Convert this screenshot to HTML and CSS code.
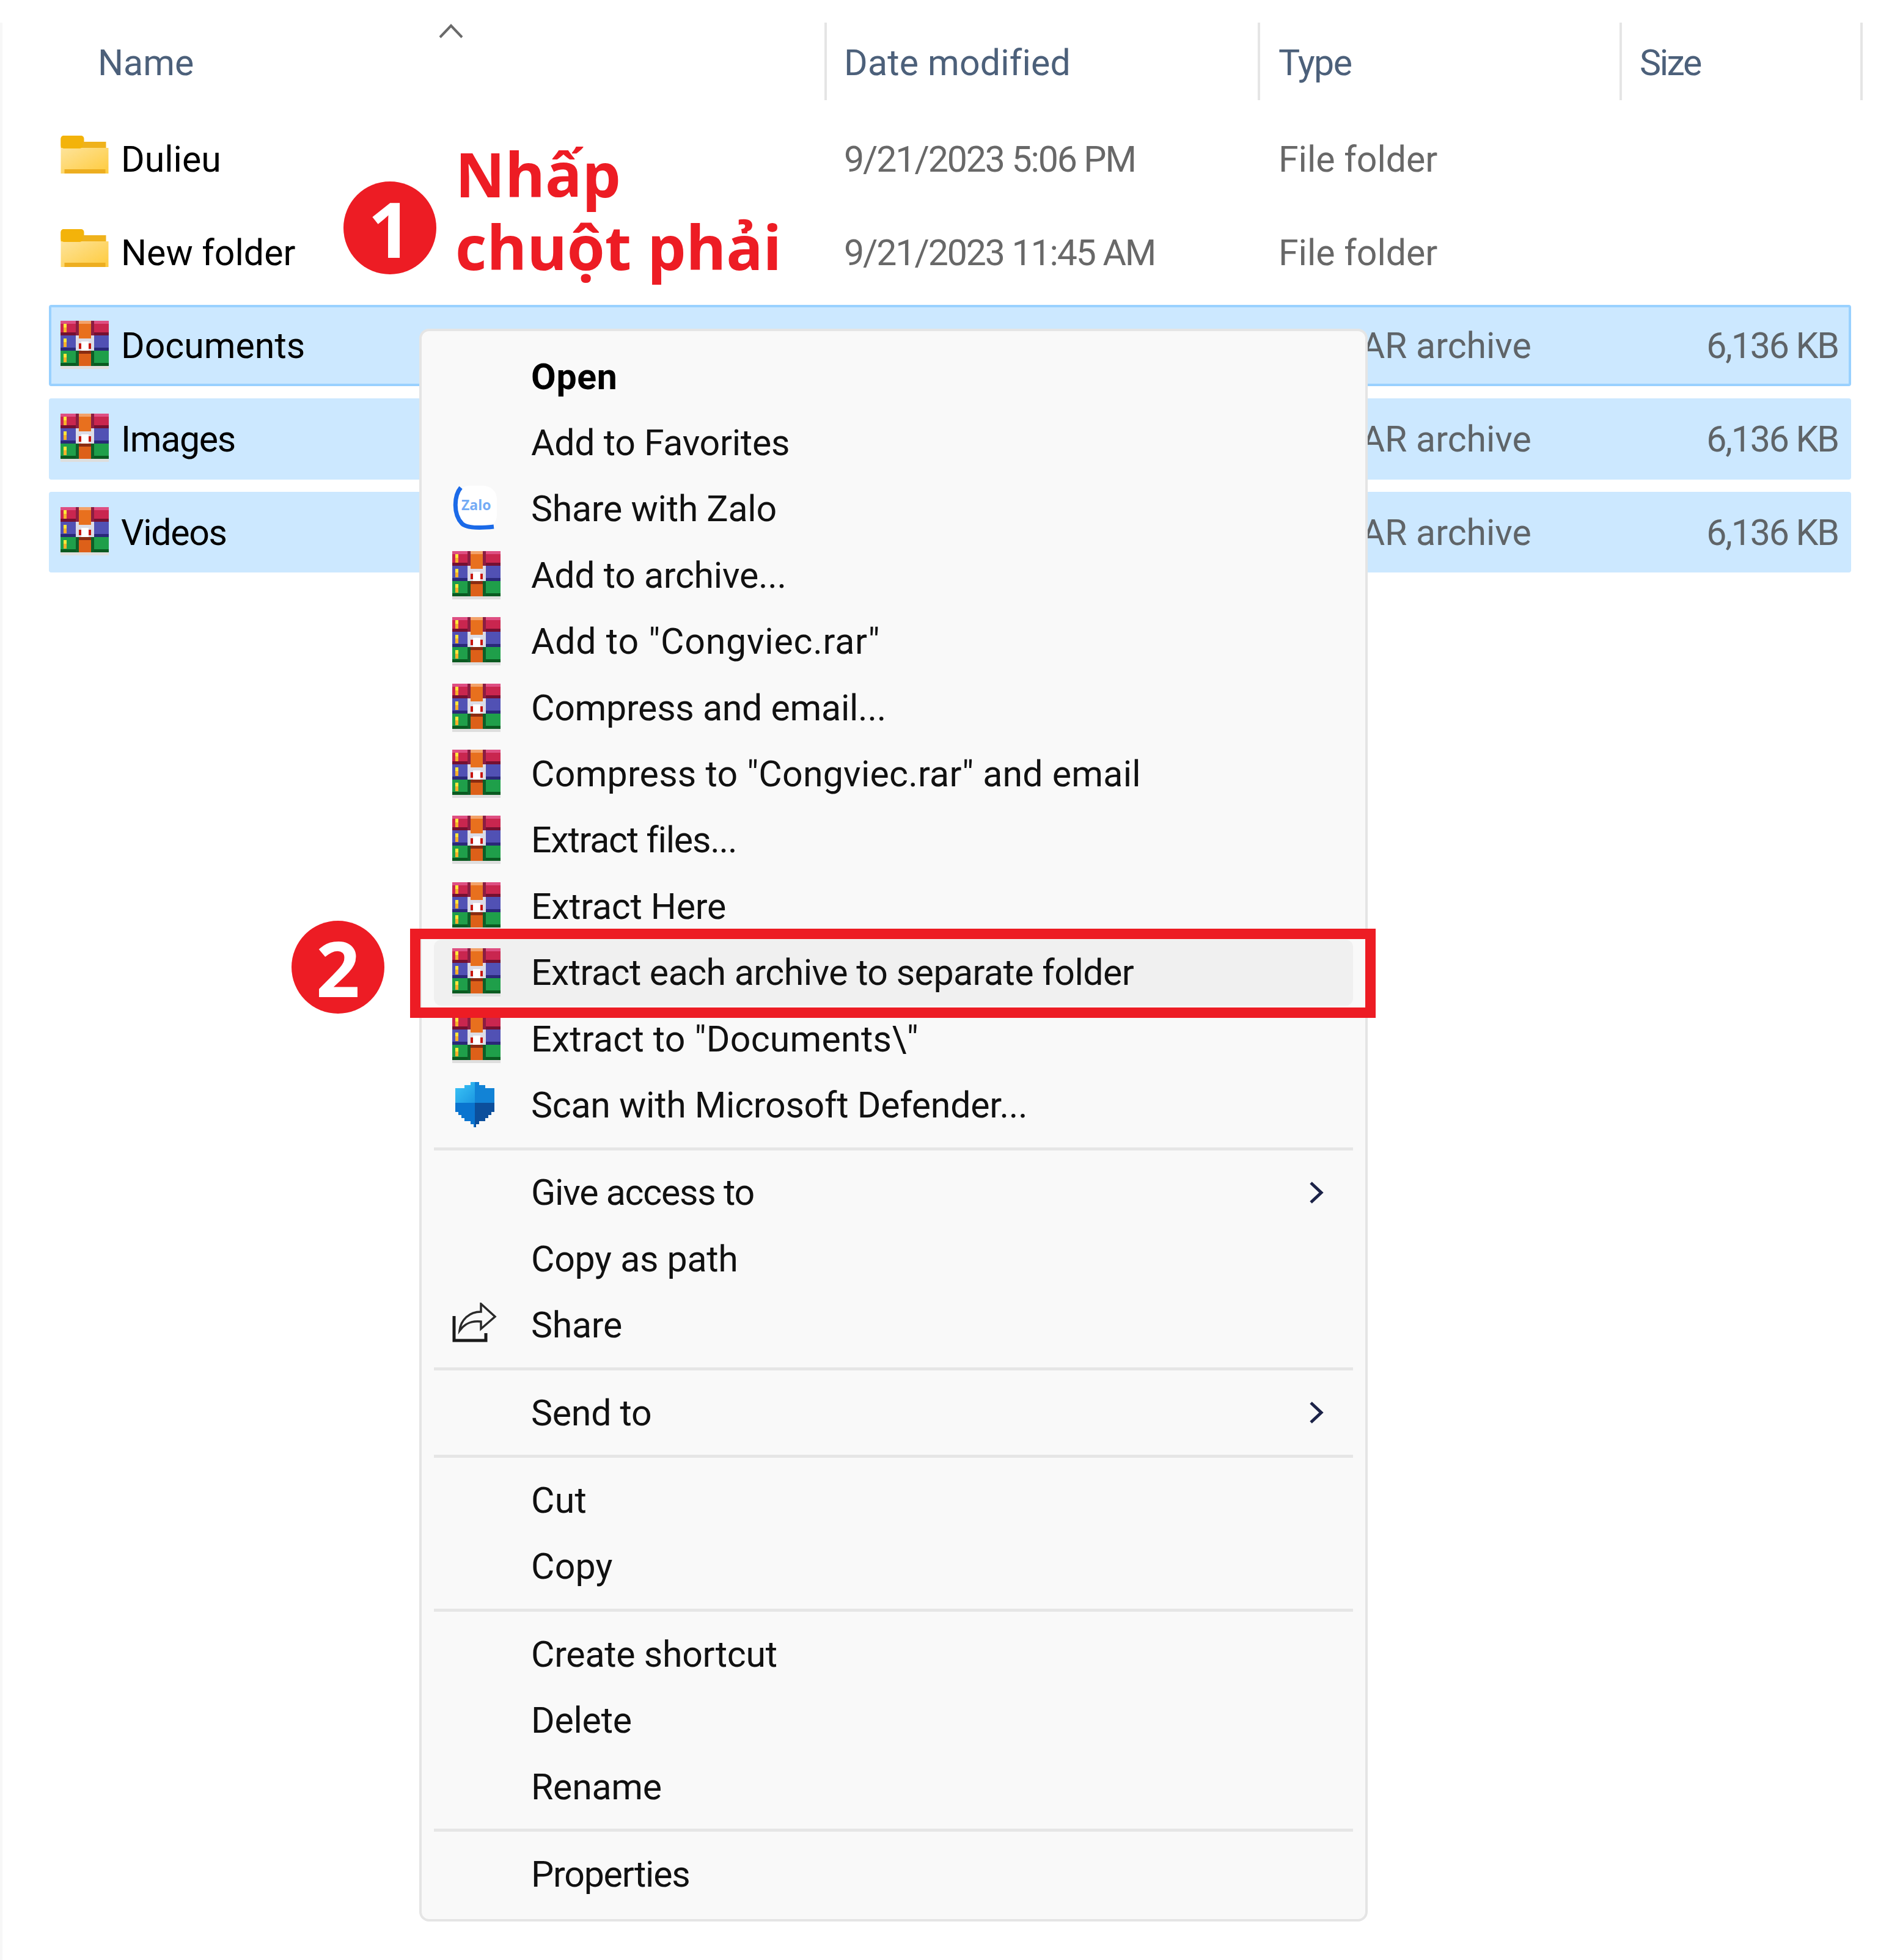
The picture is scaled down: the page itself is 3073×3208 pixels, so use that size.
FILE: index.html
```html
<!DOCTYPE html>
<html lang="vi">
<head>
<meta charset="utf-8">
<title>Extract each archive</title>
<link rel="stylesheet" href="styles.css">
</head>
<body>
<svg class="defs" aria-hidden="true">
  <defs>
    <linearGradient id="fold" x1="0" y1="0" x2="1" y2="1">
      <stop offset="0" stop-color="#fde39a"/>
      <stop offset="1" stop-color="#ffcb3c"/>
    </linearGradient>
    <linearGradient id="shieldTop" x1="0" y1="0" x2="1" y2="1">
      <stop offset="0" stop-color="#3cc6f7"/>
      <stop offset="1" stop-color="#1c98e2"/>
    </linearGradient>
    <symbol id="folder" viewBox="0 0 78 64">
      <rect x="0" y="0" width="38" height="24" rx="5" fill="#f3b30a"/>
      <rect x="30" y="10" width="44" height="12" fill="#efb21c"/>
      <rect x="0" y="20" width="78" height="42" fill="url(#fold)"/>
      <rect x="0" y="0" width="36" height="21" rx="5" fill="#f3b30a"/>
      <rect x="6" y="55" width="67" height="7" fill="#edae20"/>
    </symbol>
    <symbol id="rar" viewBox="0 0 79 79">
      <g shape-rendering="crispEdges">
        <rect y="74" width="79" height="5" fill="#dedede"/>
        <rect width="79" height="5" fill="#de4f82"/>
        <rect y="5" width="79" height="14" fill="#c9264f"/>
        <rect y="19" width="79" height="5" fill="#741030"/>
        <rect y="24" width="79" height="20" fill="#5151b4"/>
        <rect y="44" width="79" height="5" fill="#2a2878"/>
        <rect y="49" width="79" height="20" fill="#1f9f4a"/>
        <rect y="69" width="79" height="5" fill="#0a5a20"/>
        <rect x="25" width="30" height="24" fill="#8b1d42"/>
        <rect x="25" y="49" width="30" height="25" fill="#0e5e28"/>
        <rect x="30" width="20" height="5" fill="#f3a26a"/>
        <rect x="30" y="5" width="20" height="24" fill="#e8701e"/>
        <rect x="30" y="54" width="20" height="20" fill="#dd6019"/>
        <rect x="25" y="24" width="5" height="25" fill="#dcdce6"/>
        <rect x="50" y="24" width="5" height="25" fill="#dcdce6"/>
        <rect x="30" y="29" width="20" height="20" fill="#dcdce6"/>
        <rect x="30" y="37" width="4" height="9" fill="#c8160e"/>
        <rect x="46" y="37" width="4" height="9" fill="#c8160e"/>
        <rect x="34" y="34" width="12" height="15" fill="#ffffff"/>
        <rect x="30" y="49" width="20" height="5" fill="#8a2c12"/>
        <rect x="5" y="5" width="5" height="6" fill="#ffe83a"/>
        <rect x="5" y="11" width="5" height="8" fill="#f7b02a"/>
        <rect x="5" y="29" width="5" height="6" fill="#ffe83a"/>
        <rect x="5" y="35" width="5" height="8" fill="#f7b02a"/>
        <rect x="5" y="54" width="5" height="6" fill="#ffe83a"/>
        <rect x="5" y="60" width="5" height="8" fill="#f7b02a"/>
      </g>
    </symbol>
  </defs>
</svg>

<main class="window">
  <header class="head">
    <div class="head-cell head-name">Name<span class="sort"><svg class="sort-icon" viewBox="0 0 40 25"><path d="M2 23 20 4 38 23"/></svg></span></div>
    <div class="head-cell head-date">Date modified</div>
    <div class="head-cell head-type">Type</div>
    <div class="head-cell head-size">Size</div>
  </header>

  <section class="rows">
    <div class="row">
      <div class="name"><svg class="file-icon folder-icon"><use href="#folder"/></svg>Dulieu</div>
      <div class="meta nums">9/21/2023 5:06 PM</div>
      <div class="meta">File folder</div>
      <div class="size"></div>
    </div>
    <div class="row">
      <div class="name"><svg class="file-icon folder-icon"><use href="#folder"/></svg>New folder</div>
      <div class="meta nums">9/21/2023 11:45 AM</div>
      <div class="meta">File folder</div>
      <div class="size"></div>
    </div>
    <div class="row selected focused">
      <div class="name"><svg class="file-icon"><use href="#rar"/></svg>Documents</div>
      <div class="meta"></div>
      <div class="meta">WinRAR archive</div>
      <div class="size nums">6,136 KB</div>
    </div>
    <div class="row selected">
      <div class="name narrow"><svg class="file-icon"><use href="#rar"/></svg>Images</div>
      <div class="meta"></div>
      <div class="meta">WinRAR archive</div>
      <div class="size nums">6,136 KB</div>
    </div>
    <div class="row selected">
      <div class="name narrow"><svg class="file-icon"><use href="#rar"/></svg>Videos</div>
      <div class="meta"></div>
      <div class="meta">WinRAR archive</div>
      <div class="size nums">6,136 KB</div>
    </div>
  </section>
</main>

<nav class="menu">
  <div class="item strong"><span class="slot"></span>Open</div>
  <div class="item"><span class="slot"></span>Add to Favorites</div>
  <div class="item"><span class="slot"><svg class="zalo" viewBox="0 0 73 75"><rect x="6" y="0" width="67" height="70" rx="22" fill="#ffffff"/><path class="zalo-arc" d="M14 3C3 16 1 46 16 62 22 68 40 70 68 67"/><text class="zalo-text" x="15" y="40">Zalo</text></svg></span>Share with Zalo</div>
  <div class="item"><span class="slot"><svg class="menu-rar"><use href="#rar"/></svg></span>Add to archive...</div>
  <div class="item wider"><span class="slot"><svg class="menu-rar"><use href="#rar"/></svg></span>Add to "Congviec.rar"</div>
  <div class="item"><span class="slot"><svg class="menu-rar"><use href="#rar"/></svg></span>Compress and email...</div>
  <div class="item wide"><span class="slot"><svg class="menu-rar"><use href="#rar"/></svg></span>Compress to "Congviec.rar" and email</div>
  <div class="item tighter"><span class="slot"><svg class="menu-rar"><use href="#rar"/></svg></span>Extract files...</div>
  <div class="item"><span class="slot"><svg class="menu-rar"><use href="#rar"/></svg></span>Extract Here</div>
  <div class="item hover tight"><span class="slot"><svg class="menu-rar"><use href="#rar"/></svg></span>Extract each archive to separate folder</div>
  <div class="item wide"><span class="slot"><svg class="menu-rar"><use href="#rar"/></svg></span>Extract to "Documents\"</div>
  <div class="item"><span class="slot"><svg class="shield" viewBox="0 0 64 74" shape-rendering="crispEdges">
    <path fill="url(#shieldTop)" d="M25 0H32V34H0V10H15V5H25Z"/>
    <path fill="#1283d6" d="M32 0H39V5H49V10H64V34H32Z"/>
    <path fill="#0a74cf" d="M0 34H32V74H30V69H25V64H15V59H10V54H5V49H0Z"/>
    <path fill="#0c4f9c" d="M32 34H64V49H59V54H54V59H49V64H39V69H34V74H32Z"/>
  </svg></span>Scan with Microsoft Defender...</div>
  <div class="sep"></div>
  <div class="item tighter"><span class="slot"></span>Give access to<svg class="sub" viewBox="0 0 24 36"><path d="M3 2 20 18 3 34"/></svg></div>
  <div class="item"><span class="slot"></span>Copy as path</div>
  <div class="item"><span class="slot"><svg class="share" viewBox="0 0 73 66"><path class="share-tray" d="M3 22V62H55V50"/><path d="M47 2 70 23 47 43V31C30 29 20 35 12 46 14 28 28 15 47 15Z"/></svg></span>Share</div>
  <div class="sep"></div>
  <div class="item"><span class="slot"></span>Send to<svg class="sub" viewBox="0 0 24 36"><path d="M3 2 20 18 3 34"/></svg></div>
  <div class="sep"></div>
  <div class="item wide"><span class="slot"></span>Cut</div>
  <div class="item wide"><span class="slot"></span>Copy</div>
  <div class="sep"></div>
  <div class="item"><span class="slot"></span>Create shortcut</div>
  <div class="item"><span class="slot"></span>Delete</div>
  <div class="item"><span class="slot"></span>Rename</div>
  <div class="sep"></div>
  <div class="item tighter"><span class="slot"></span>Properties</div>
</nav>

<div class="callout">Nhấp<br>chuột phải</div>
<div class="badge badge-one">1</div>
<div class="badge badge-two">2</div>
<div class="mark"></div>
</body>
</html>
```

FILE: styles.css
```css
* { box-sizing: border-box; }

html, body {
  margin: 0;
  padding: 0;
  background: #ffffff;
}

body {
  position: relative;
  width: 3073px;
  height: 3208px;
  overflow: hidden;
  font-family: Roboto, "Liberation Sans", sans-serif;
  font-size: 59px;
  color: #000000;
}

.defs {
  position: absolute;
  width: 0;
  height: 0;
}

.window {
  height: 3171px;
  margin-top: 37px;
  padding-left: 76px;
  border-left: 4px solid #f7f7f7;
}

/* column header */
.head {
  display: grid;
  grid-template-columns: 1273px 709px 592px 394px;
  width: 2968px;
  height: 127px;
  margin-bottom: 30px;
  color: #4c607a;
}

.head-cell {
  display: flex;
  align-items: center;
  padding-top: 4px;
  border-right: 4px solid #e5e5e5;
}

.head-name {
  position: relative;
  padding-left: 80px;
}

.head-date { padding-left: 28px; letter-spacing: 0.2px; }
.head-type { padding-left: 30px; letter-spacing: -1.5px; }
.head-size { padding-left: 29px; letter-spacing: -2.4px; }

.sort {
  position: absolute;
  left: 638px;
  top: 1px;
  width: 40px;
  height: 25px;
}

.sort-icon {
  display: block;
  width: 40px;
  height: 25px;
  fill: none;
  stroke: #6a6a6a;
  stroke-width: 4;
}

/* file rows */
.rows {
  display: flex;
  flex-direction: column;
  gap: 20px;
}

.row {
  display: grid;
  grid-template-columns: 1282px 711px 1fr auto;
  align-items: center;
  width: 2949px;
  height: 132.7px;
  padding: 0 17px 0 15px;
  border: 4px solid transparent;
  border-radius: 4px;
  color: #686868;
}

.selected {
  background: #cce8ff;
  border-color: #cce8ff;
  color: #5f6468;
}

.focused { border-color: #99d1ff; }

.name {
  display: flex;
  align-items: center;
  gap: 20px;
  color: #000000;
}

.narrow { letter-spacing: -1.3px; }
.nums { letter-spacing: -2.1px; }

.file-icon {
  display: block;
  width: 79px;
  height: 79px;
  margin-bottom: 3px;
}

.folder-icon { height: 64px; margin-bottom: 12px; }

.size { text-align: right; }

/* context menu */
.menu {
  position: absolute;
  left: 686px;
  top: 538px;
  width: 1552px;
  height: 2607px;
  padding: 20px;
  background: #f9f9f9;
  border: 4px solid #e5e5e5;
  border-radius: 16px;
  color: #111111;
}

.item {
  display: flex;
  align-items: center;
  height: 108.4px;
  padding-left: 30px;
  border-radius: 12px;
  letter-spacing: -0.25px;
}

.strong { font-weight: 700; letter-spacing: 0.7px; color: #000000; }
.hover { background: #f0f0f0; }
.wider { letter-spacing: 0.8px; }
.wide { letter-spacing: 0.25px; }
.tight { letter-spacing: -0.5px; }
.tighter { letter-spacing: -1.2px; }

.slot {
  display: flex;
  align-items: center;
  width: 129px;
  height: 100%;
  flex: none;
}

.menu-rar { display: block; width: 79px; height: 79px; }
.zalo { display: block; width: 73px; height: 75px; }
.shield { display: block; width: 64px; height: 74px; margin-left: 5px; }
.zalo-arc { fill: none; stroke: #1b6ae8; stroke-width: 7; }
.zalo-text {
  font-family: "Open Sans", sans-serif;
  font-size: 23px;
  font-weight: 700;
  letter-spacing: 0;
  fill: #74abf5;
}

.share {
  display: block;
  width: 73px;
  height: 66px;
  margin-bottom: 8px;
  fill: none;
  stroke: #2a2a2a;
  stroke-width: 3.5;
}

.share-tray { stroke: #1a1a1a; stroke-width: 5; }

.sub {
  width: 24px;
  height: 36px;
  margin-left: auto;
  margin-right: 48px;
  fill: none;
  stroke: #1c2348;
  stroke-width: 5;
}

.sep {
  height: 5px;
  margin: 15px 0;
  background: #e6e6e6;
}

/* annotations */
.callout {
  position: absolute;
  left: 745px;
  top: 225px;
  font-family: "Open Sans", sans-serif;
  font-size: 100px;
  font-weight: 700;
  line-height: 119px;
  color: #ed1c24;
  white-space: nowrap;
}

.badge {
  position: absolute;
  display: flex;
  align-items: center;
  justify-content: center;
  width: 152px;
  height: 152px;
  border-radius: 50%;
  background: #ed1c24;
  color: #ffffff;
  font-family: "Open Sans", sans-serif;
  font-size: 126px;
  font-weight: 700;
  line-height: 1;
}

.badge-one { left: 562px; top: 297px; }
.badge-two { left: 477px; top: 1507px; }

.mark {
  position: absolute;
  left: 671px;
  top: 1520px;
  width: 1580px;
  height: 146px;
  border: 17px solid #ed1c24;
}
```
